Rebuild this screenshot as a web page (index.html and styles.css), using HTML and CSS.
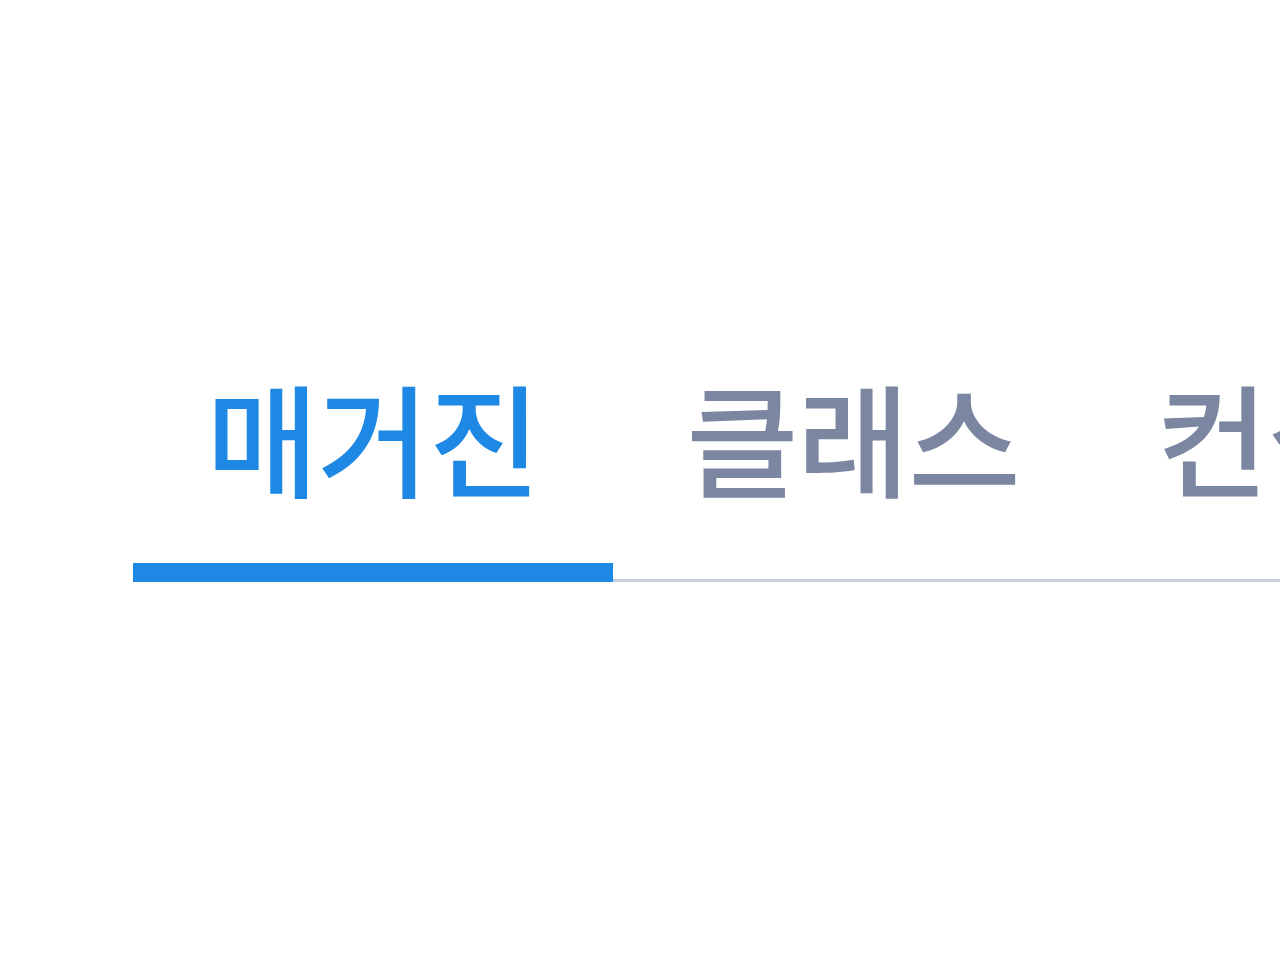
FILE: index.html
```html
<!DOCTYPE html>
<html lang="ko">
<head>
    <meta charset="UTF-8">
    <meta name="viewport" content="width=device-width, initial-scale=1.0">
    <title>탭 메뉴</title>
    <link rel="stylesheet" href="styles.css">
</head>
<body>
    <div id="page">
        <ul id="tabs">
            <li class="tab active">매거진</li>
            <li class="tab">클래스</li>
            <li class="tab">컨설팅</li>
        </ul>
    </div>
</body>
</html>
```

FILE: styles.css
```css
body {
    margin: 0;
    background: #ffffff;
    font-family: 'Noto Sans CJK KR', 'Noto Sans', sans-serif;
    overflow: hidden;
}
#page {
    padding-top: 360px;
    padding-left: 133px;
}
#tabs {
    display: flex;
    margin: 0;
    padding: 0;
    list-style: none;
    border-bottom: 3px solid #c6ccdb;
    width: 1600px;
}
.tab {
    position: relative;
    flex: 0 0 480px;
    text-align: center;
    font-size: 122px;
    font-weight: 500;
    letter-spacing: -1px;
    line-height: 1;
    padding: 14px 0 83px;
    color: #7b86a0;
}
.tab:last-child {
    flex-basis: 460px;
}
.tab.active {
    color: #1e88e5;
}
.tab.active::after {
    content: "";
    position: absolute;
    left: 0;
    right: 0;
    bottom: -3px;
    height: 19px;
    background: #1e88e5;
}
```
